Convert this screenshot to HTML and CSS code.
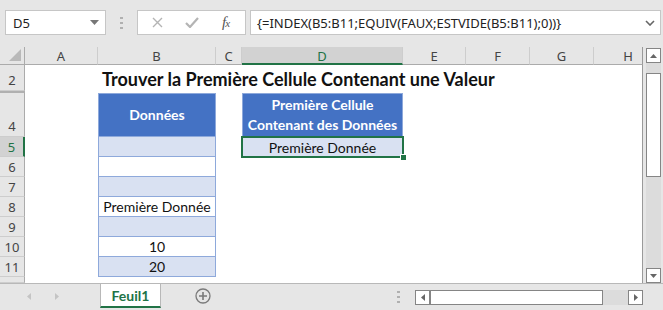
FILE: index.html
```html
<!DOCTYPE html>
<html>

<head>
    <title>Feuil1 - Première cellule non vide</title>
    <link rel="stylesheet" href="styles.css">
</head>

<body>
    <div class="formula-bar">
        <div class="name-box">
            <span>D5</span>
            <svg width="9" height="5" viewBox="0 0 9 5"><path d="M0 0h9L4.5 5z" fill="#777"/></svg>
        </div>
        <div class="grip">
            <svg width="3" height="12" viewBox="0 0 3 12"><path d="M0 0h3v2H0zM0 5h3v2H0zM0 10h3v2H0z" fill="#b0b0b0"/></svg>
        </div>
        <div class="fx-box">
            <svg width="11" height="11" viewBox="0 0 11 11"><path d="M1 1l9 9M10 1l-9 9" stroke="#b4b4b4" stroke-width="1.4"/></svg>
            <svg width="14" height="11" viewBox="0 0 14 11"><path d="M1 6l4 4 8-9" stroke="#b4b4b4" stroke-width="2.2" fill="none"/></svg>
            <span class="fx"><i>f</i><i class="x">x</i></span>
        </div>
        <div class="formula">
            <span>{=INDEX(B5:B11;EQUIV(FAUX;ESTVIDE(B5:B11);0))}</span>
            <svg width="10" height="6" viewBox="0 0 10 6"><path d="M1 1l4 4 4-4" stroke="#666" stroke-width="1.6" fill="none"/></svg>
        </div>
    </div>

    <div class="sheet">
        <div class="grid">
            <!-- column headers -->
            <div class="hd corner"><svg width="12" height="12" viewBox="0 0 12 12"><path d="M12 0v12H0z" fill="#b9b9b9"/></svg></div>
            <div class="hd col">A</div>
            <div class="hd col">B</div>
            <div class="hd col">C</div>
            <div class="hd col active">D</div>
            <div class="hd col">E</div>
            <div class="hd col">F</div>
            <div class="hd col">G</div>
            <div class="hd col last">H</div>

            <!-- row 2 -->
            <div class="hd row bottom">2</div>
            <div class="c"></div>
            <div class="c title edge">Trouver la Première Cellule Contenant une Valeur</div>

            <!-- row 3 (hidden) -->
            <div class="hd row hidden-row"></div>
            <div class="c span8 edge"></div>

            <!-- row 4 -->
            <div class="hd row bottom">4</div>
            <div class="c"></div>
            <div class="c tb head">Données</div>
            <div class="c"></div>
            <div class="c tb head">Première Cellule<br>Contenant des Données</div>
            <div class="c span4 edge"></div>

            <!-- row 5 -->
            <div class="hd row active">5</div>
            <div class="c"></div>
            <div class="c tb band"></div>
            <div class="c"></div>
            <div class="c tb band result">Première Donnée</div>
            <div class="c span4 edge"></div>

            <div class="hd row">6</div>
            <div class="c"></div>
            <div class="c tb"></div>
            <div class="c span6 edge"></div>

            <div class="hd row">7</div>
            <div class="c"></div>
            <div class="c tb band"></div>
            <div class="c span6 edge"></div>

            <div class="hd row">8</div>
            <div class="c"></div>
            <div class="c tb">Première Donnée</div>
            <div class="c span6 edge"></div>

            <div class="hd row">9</div>
            <div class="c"></div>
            <div class="c tb band"></div>
            <div class="c span6 edge"></div>

            <div class="hd row">10</div>
            <div class="c"></div>
            <div class="c tb">10</div>
            <div class="c span6 edge"></div>

            <div class="hd row">11</div>
            <div class="c"></div>
            <div class="c tb band">20</div>
            <div class="c span6 edge"></div>

            <div class="hd row"></div>
            <div class="c span8 edge"></div>
        </div>

        <div class="vscroll">
            <div class="sb-btn"><svg width="7" height="4" viewBox="0 0 7 4"><path d="M0 4h7L3.5 0z" fill="#666"/></svg></div>
            <div class="vthumb"></div>
            <div class="sb-fill"></div>
            <div class="sb-btn"><svg width="7" height="4" viewBox="0 0 7 4"><path d="M0 0h7L3.5 4z" fill="#666"/></svg></div>
        </div>
    </div>

    <div class="tabs">
        <div class="tab-nav">
            <svg width="4" height="7" viewBox="0 0 4 7"><path d="M4 0v7L0 3.5z" fill="#c4c4c4"/></svg>
            <svg width="4" height="7" viewBox="0 0 4 7"><path d="M0 0v7l4-3.5z" fill="#c4c4c4"/></svg>
        </div>
        <div class="tab">Feuil1</div>
        <div class="add-sheet">
            <svg width="16" height="16" viewBox="0 0 16 16"><circle cx="8" cy="8" r="7" fill="none" stroke="#7a7a7a" stroke-width="1.3"/><path d="M8 4v8M4 8h8" stroke="#7a7a7a" stroke-width="1.6"/></svg>
        </div>
        <div class="grip tab-grip">
            <svg width="3" height="12" viewBox="0 0 3 12"><path d="M0 0h3v2H0zM0 5h3v2H0zM0 10h3v2H0z" fill="#b0b0b0"/></svg>
        </div>
        <div class="hscroll">
            <div class="sb-btn"><svg width="4" height="7" viewBox="0 0 4 7"><path d="M4 0v7L0 3.5z" fill="#666"/></svg></div>
            <div class="hthumb"></div>
            <div class="sb-fill"></div>
            <div class="sb-btn"><svg width="4" height="7" viewBox="0 0 4 7"><path d="M0 0v7l4-3.5z" fill="#666"/></svg></div>
        </div>
    </div>
</body>

</html>
```

FILE: styles.css
```css
* {
    box-sizing: border-box;
}

body {
    margin: 0;
    width: 663px;
    height: 310px;
    overflow: hidden;
    background-color: #e6e6e6;
    font-family: "Noto Sans", sans-serif;
    color: #222;
}

/* formula bar */

.formula-bar {
    height: 47px;
    display: flex;
    padding: 10px 2px 0 5px;
}

.name-box,
.fx-box,
.formula {
    height: 25px;
    background-color: #fff;
    border: 1px solid #c6c6c6;
    display: flex;
    align-items: center;
}

.name-box {
    width: 101px;
    padding: 0 6px 0 7px;
    justify-content: space-between;
    font-size: 13px;
}

.grip {
    width: 31px;
    display: flex;
    justify-content: center;
    padding-top: 7px;
}

.fx-box {
    width: 109px;
    padding: 0 0 0 14px;
    gap: 22px;
}

.fx {
    font-family: "Liberation Serif", serif;
    font-size: 15px;
    color: #555;
    letter-spacing: -1px;
    margin-left: 1px;
}

.fx .x {
    font-size: 11px;
}

.formula {
    flex: 1;
    margin-left: 4px;
    padding: 0 5px 0 6px;
    justify-content: space-between;
    font-size: 13px;
}

/* sheet */

.sheet {
    display: flex;
    height: 236px;
}

.grid {
    width: 643px;
    display: grid;
    grid-template-columns: 25px 73px 118px 26px 161px 63px 64px 64px 49px;
    grid-template-rows: 18px 26px 2px 44px repeat(7, 20px) 6px;
    background-color: #fff;
    font-family: Lato, sans-serif;
    font-size: 14px;
}

.hd {
    background-color: #e6e6e6;
    color: #444;
    font-family: "Noto Sans", sans-serif;
    font-size: 13px;
    display: flex;
    justify-content: center;
    align-items: center;
}

.corner {
    border-right: 1px solid #ababab;
    border-bottom: 1px solid #ababab;
    justify-content: flex-end;
    align-items: flex-end;
    padding: 0 3px 3px 0;
}

.col {
    border-right: 1px solid #cdcdcd;
    border-bottom: 1px solid #ababab;
    padding-top: 1px;
}

.col.last {
    border-right: 1px solid #9a9a9a;
    justify-content: flex-end;
    padding-right: 9px;
}

.col.active {
    background-color: #d2d2d2;
    color: #217346;
    border-bottom: 2px solid #217346;
}

.row {
    border-right: 1px solid #ababab;
    border-bottom: 1px solid #cdcdcd;
}

.row.bottom {
    align-items: flex-end;
    padding-bottom: 1px;
}

.row.hidden-row {
    border-bottom: 1px solid #b0b0b0;
    border-top: 1px solid #b0b0b0;
}

.row.active {
    background-color: #d2d2d2;
    color: #217346;
    border-right: 2px solid #217346;
}

.edge {
    border-right: 1px solid #9a9a9a;
}

.span4 {
    grid-column: span 4;
}

.span6 {
    grid-column: span 6;
}

.span8 {
    grid-column: span 8;
}

.title {
    grid-column: span 7;
    font-weight: bold;
    font-size: 18px;
    color: #111;
    display: flex;
    align-items: flex-end;
    padding: 0 0 1px 4px;
    white-space: nowrap;
}

.tb {
    border: 1px solid #8ea9db;
    border-top: none;
    display: flex;
    align-items: center;
    justify-content: center;
    text-align: center;
    color: #111;
}

.tb.head {
    background-color: #4472c4;
    border-top: 1px solid #8ea9db;
    color: #fff;
    font-weight: bold;
    line-height: 20px;
}

.tb.band {
    background-color: #d9e1f2;
}

.result {
    position: relative;
    border: none;
    outline: 2px solid #217346;
    outline-offset: -1px;
}

.result::after {
    content: "";
    position: absolute;
    right: -3px;
    bottom: -3px;
    width: 5px;
    height: 5px;
    background-color: #217346;
    border: 1px solid #fff;
    border-right: none;
    border-bottom: none;
}

/* scrollbars */

.vscroll {
    width: 20px;
    margin: 1px 2px 0 3px;
    background-color: #dcdcdc;
    display: flex;
    flex-direction: column;
}

.sb-btn {
    width: 15px;
    height: 15px;
    background-color: #fff;
    border: 1px solid #858585;
    display: flex;
    align-items: center;
    justify-content: center;
    flex-shrink: 0;
}

.vthumb {
    margin-top: 10px;
    height: 104px;
    background-color: #fff;
    border: 1px solid #858585;
}

.sb-fill {
    flex: 1;
}

/* sheet tabs */

.tabs {
    height: 27px;
    border-top: 1px solid #b8b8b8;
    display: flex;
}

.tab-nav {
    width: 100px;
    display: flex;
    align-items: center;
    padding: 0 0 2px 27px;
    gap: 24px;
}

.tab {
    width: 61px;
    height: 24px;
    background-color: #fff;
    border-left: 1px solid #b8b8b8;
    border-right: 1px solid #b8b8b8;
    border-bottom: 2px solid #217346;
    color: #217346;
    font-family: Lato, sans-serif;
    font-weight: bold;
    font-size: 14px;
    display: flex;
    align-items: center;
    justify-content: center;
}

.add-sheet {
    width: 83px;
    display: flex;
    align-items: center;
    padding: 0 0 2px 34px;
}

.tab-grip {
    width: 171px;
    padding-top: 7px;
    justify-content: flex-end;
    padding-right: 15px;
}

.hscroll {
    width: 228px;
    height: 15px;
    margin-top: 6px;
    background-color: #dcdcdc;
    display: flex;
}

.hthumb {
    width: 173px;
    background-color: #fff;
    border: 1px solid #858585;
}
```
